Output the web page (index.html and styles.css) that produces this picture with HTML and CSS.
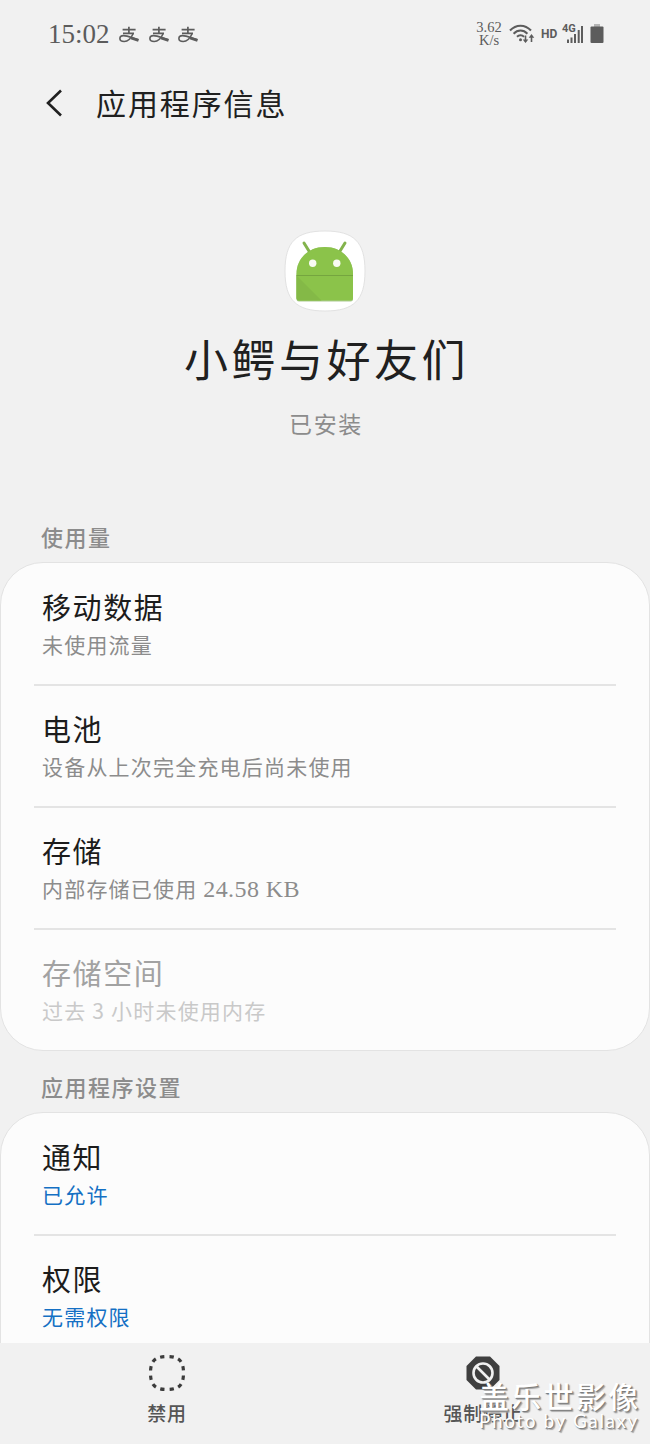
FILE: index.html
```html
<!DOCTYPE html>
<html lang="zh-CN">
<head>
<meta charset="utf-8">
<title>应用程序信息</title>
<link rel="stylesheet" href="styles.css">
</head>
<body>
<svg class="defs" width="0" height="0">
  <symbol id="pay" viewBox="0 0 20 18">
    <g fill="none" stroke="currentColor">
      <path d="M3.600 3.700h13M9.900 .8v6.500M4 7.300h11" stroke-width="1.700"/>
      <path d="M14.200 7.500c-2 4.500-5.200 8-9 8-2.500 0-4.300-1-4.300-3 0-1.900 1.500-2.900 3.600-2.900 4 0 8.500 2.300 14.800 4.200" stroke-width="1.600"/>
      <path d="M12 11.900l7.500 2.500" stroke-width="2.800"/>
    </g>
  </symbol>
</svg>
<div class="phone">
  <div class="status">
    <span class="clock">15:02</span>
    <div class="notes">
      <svg class="pay"><use href="#pay"/></svg>
      <svg class="pay"><use href="#pay"/></svg>
      <svg class="pay"><use href="#pay"/></svg>
    </div>
    <div class="speed"><span>3.62</span><span>K/s</span></div>
    <svg class="wifi" width="26" height="22" viewBox="0 0 26 22">
      <g fill="none" stroke="#5c5c5c" stroke-width="2">
        <path d="M1 7.500C7 1 16 1 22 7.500M4.600 10.700c4-4.200 9.800-4.200 13.800 0M8 13.800c2-2 5.200-2 7 0"/>
        <path d="M16.500 12.500v6M22.500 19v-6" stroke-width="1.600"/>
      </g>
      <circle cx="11.500" cy="16.800" r="1.500" fill="#5c5c5c"/>
      <path d="M13.700 16.500h5.600l-2.800 3.600zM19.700 14.700h5.600l-2.800-3.600z" fill="#5c5c5c"/>
    </svg>
    <span class="hd">HD</span>
    <div class="cell">
      <span class="gen">4G</span>
      <svg width="22" height="20" viewBox="0 0 22 20"><path d="M5 15.500h2V19H5zM8.500 13.500h2V19h-2zM12 10h2v9h-2zM15.700 6h2v13h-2zM19 2h2v17h-2z" fill="#5c5c5c"/></svg>
    </div>
    <svg class="battery" width="14" height="20" viewBox="0 0 14 20"><path d="M4 0h6v3H4z" fill="#b5b5b5"/><rect x=".5" y="2.500" width="13" height="16.500" rx="1" fill="#5c5c5c"/></svg>
  </div>
  <header class="bar">
    <svg width="18" height="30" viewBox="0 0 18 30"><path d="M15 2.500L2 15l13 12.500" fill="none" stroke="#202020" stroke-width="2.600"/></svg>
    <h1>应用程序信息</h1>
  </header>
  <main>
    <section class="app">
      <svg width="82" height="82" viewBox="0 0 82 82">
        <path d="M41 1C70 1 81 12 81 41S70 81 41 81 1 70 1 41 12 1 41 1z" fill="#fff" stroke="#e2e2e2"/>
        <path d="M20 13l6.500 10.500M61 13l-6.500 10.500" stroke="#83b34c" stroke-width="3" stroke-linecap="round"/>
        <path d="M12.500 46V44C12.500 28 25 17 40.800 17S69 28 69 44v25q0 2.500-2.500 2.500H15q-2.500 0-2.500-2.500z" fill="#689f38" opacity=".55"/>
        <path d="M12.500 46V44C12.500 28 25 17 40.800 17S69 28 69 44v24q0 2.500-2.500 2.500H15q-2.500 0-2.500-2.500z" fill="#8bc34a"/>
        <path d="M12.500 45.500l25 25H15q-2.500 0-2.500-2.500z" fill="#84b947"/>
        <path d="M12.500 45.500H69" stroke="#75a53f" stroke-width="1.200"/>
        <circle cx="28.700" cy="33.300" r="3.700" fill="#f8fbf3"/><circle cx="52.800" cy="33.300" r="3.700" fill="#f8fbf3"/>
      </svg>
      <h2>小鳄与好友们</h2>
      <p>已安装</p>
    </section>
    <h3>使用量</h3>
    <div class="card">
      <div class="row"><b>移动数据</b><span>未使用流量</span></div>
      <div class="row"><b>电池</b><span>设备从上次完全充电后尚未使用</span></div>
      <div class="row"><b>存储</b><span>内部存储已使用 <i>24.58 KB</i></span></div>
      <div class="row off"><b>存储空间</b><span>过去 3 小时未使用内存</span></div>
    </div>
    <h3 class="second">应用程序设置</h3>
    <div class="card open">
      <div class="row link"><b>通知</b><span>已允许</span></div>
      <div class="row link"><b>权限</b><span>无需权限</span></div>
    </div>
  </main>
  <nav>
    <div class="action">
      <svg width="38" height="38" viewBox="0 0 38 38"><path d="M19 2.500C31 2.500 35.500 7 35.500 19S31 35.500 19 35.500 2.500 31 2.500 19 7 2.500 19 2.500z" pathLength="96" fill="none" stroke="#3c3c3c" stroke-width="3.200" stroke-dasharray="3.900 4.100" stroke-dashoffset="-2"/></svg>
      <span>禁用</span>
    </div>
    <div class="action">
      <svg width="38" height="38" viewBox="0 0 38 38"><path d="M12 2.500h14L35.500 12v14L26 35.500H12L2.500 26V12z" fill="#3f3f3f"/><circle cx="19" cy="19" r="9.500" fill="none" stroke="#f1f1f1" stroke-width="2.600"/><path d="M12.500 12.500l13 13" stroke="#f1f1f1" stroke-width="2.600"/></svg>
      <span>强制停止</span>
    </div>
  </nav>
  <div class="mark"><span class="zh">盖乐世影像</span><span class="en">Photo by Galaxy</span></div>
</div>
</body>
</html>
```
FILE: styles.css
```css
* { box-sizing: border-box; margin: 0; padding: 0; }
body { background: #f1f1f1; font-family: "Noto Sans CJK SC", sans-serif; color: #202020; }
.defs { position: absolute; }
.phone { position: relative; width: 650px; height: 1444px; display: flex; flex-direction: column; overflow: hidden; }

.status { height: 68px; flex: none; display: flex; align-items: center; padding: 0 46px 0 48px; color: #5c5c5c; }
.clock { font: 27px/30px "Liberation Serif", serif; width: 71px; }
.notes { display: flex; gap: 9.500px; flex: 1; padding-top: 2px; }
.pay { width: 20px; height: 18px; }
.speed { display: flex; flex-direction: column; align-items: center; font: 14.500px/13px "Liberation Serif", serif; width: 26px; margin-right: 7px; }
.wifi { margin-right: 6px; }
.hd { font: 700 12px/16px Roboto, sans-serif; width: 21px; }
.cell { position: relative; width: 22px; height: 20px; margin-right: 6px; }
.gen { position: absolute; left: 0; top: -1px; font: 700 11px/12px Roboto, sans-serif; }

.bar { height: 70px; flex: none; display: flex; align-items: center; gap: 32px; padding-left: 46px; }
.bar h1 { font-size: 30px; line-height: 40px; font-weight: 400; letter-spacing: 1.900px; margin-top: -2px; }

main { flex: 1; min-height: 0; overflow: hidden; }
.app { display: flex; flex-direction: column; align-items: center; padding-top: 92px; height: 379px; }
.app svg { display: block; }
.app h2 { font-size: 44px; line-height: 60px; font-weight: 400; letter-spacing: 3.500px; margin: 16px 0 0 3px; }
.app p { font-size: 23px; line-height: 34px; letter-spacing: 1.700px; margin: 18px 0 0 2px; color: #8c8c8c; }

h3 { font-size: 22px; line-height: 32px; font-weight: 500; letter-spacing: 1.500px; color: #8c8c8c; padding-left: 41px; margin: 3px 0 10px; }
.second { margin: 19px 0 10px; }
.card { background: #fcfcfc; border: 1px solid #e3e3e3; border-radius: 43px; padding: 0 33px; }
.row { height: 122px; display: flex; flex-direction: column; padding: 22px 8px 0; border-bottom: 2px solid #e4e4e4; }
.row:first-child { height: 123px; padding-top: 23px; }
.row:last-child { height: 120px; border-bottom: 0; }
.open .row:last-child { height: 170px; }
.row b { font-size: 29px; line-height: 40px; font-weight: 400; letter-spacing: 1.600px; color: #1c1c1c; }
.row span { font-size: 21px; line-height: 30px; letter-spacing: 1.200px; color: #8c8c8c; margin-top: 3px; }
.row i { font: 24px/24px "Liberation Serif", serif; letter-spacing: .4px; }
.off b { color: #a2a2a2; }
.row.off span { color: #c9c9c9; }
.row.link span { color: #1470c4; }

nav { height: 101px; flex: none; display: flex; justify-content: space-between; background: #f1f1f1; padding: 11px 107px 0 107px; }
.action { width: 120px; display: flex; flex-direction: column; align-items: center; }
.action span { font-size: 19px; line-height: 28px; font-weight: 500; color: #555; margin-top: 7px; letter-spacing: .7px; }

.mark { position: absolute; left: 479px; top: 1377px; width: 171px; color: #fff; text-shadow: 1px 1px 1px #777, 2px 2px 1px #aaa; display: flex; flex-direction: column; }
.zh { font-size: 30px; line-height: 36px; font-weight: 500; letter-spacing: 2.300px; white-space: nowrap; }
.en { font: 19px/20px Lato, sans-serif; letter-spacing: 1.600px; white-space: nowrap; margin-top: -2px; }
```
